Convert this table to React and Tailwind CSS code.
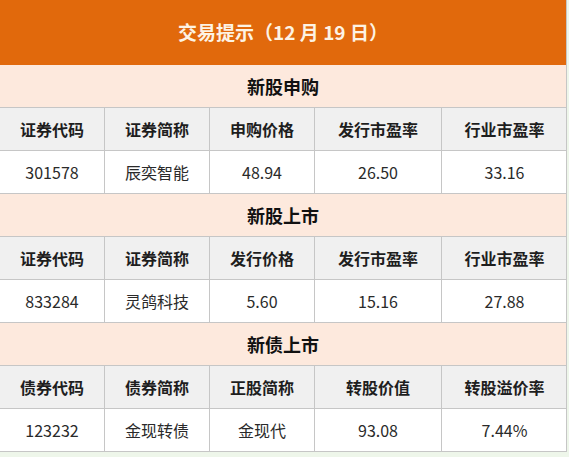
const sections = [
  {
    title: "新股申购",
    head: ["证券代码", "证券简称", "申购价格", "发行市盈率", "行业市盈率"],
    row: ["301578", "辰奕智能", "48.94", "26.50", "33.16"],
  },
  {
    title: "新股上市",
    head: ["证券代码", "证券简称", "发行价格", "发行市盈率", "行业市盈率"],
    row: ["833284", "灵鸽科技", "5.60", "15.16", "27.88"],
  },
  {
    title: "新债上市",
    head: ["债券代码", "债券简称", "正股简称", "转股价值", "转股溢价率"],
    row: ["123232", "金现转债", "金现代", "93.08", "7.44%"],
  },
];

const cols = "grid grid-cols-[105px_105px_105px_127px_125px]";

function Row({ cells, head }) {
  return (
    <div className={`${cols} h-[43px] border-b border-[#c6c6c6] ${head ? "bg-[#f0f0f0]" : "bg-white"}`}>
      {cells.map((c, i) => (
        <div
          key={i}
          className={`flex items-center justify-center text-[16px] ${
            i < 4 ? "border-r border-[#c6c6c6]" : ""
          } ${head ? "font-bold text-[#1e1e1e]" : "text-[#2a2a2a]"}`}
        >
          {c}
        </div>
      ))}
    </div>
  );
}

export default function App() {
  return (
    <div
      className="w-[569px] h-[457px] bg-[#eef6ea] overflow-hidden"
      style={{ fontFamily: '"Noto Sans CJK SC", "Noto Sans", sans-serif' }}
    >
      <div className="w-[567px] border-r border-[#c6c6c6] bg-white">
        <div className="h-[65px] bg-[#e1690c] flex items-center justify-center text-[19px] font-bold text-[#fdf3e4]">
          交易提示（12 月 19 日）
        </div>
        {sections.map((s) => (
          <div key={s.title}>
            <div className="h-[43px] bg-[#fde9dd] border-b border-[#c6c6c6] flex items-center justify-center text-[18px] font-bold text-[#111]">
              {s.title}
            </div>
            <Row cells={s.head} head />
            <Row cells={s.row} />
          </div>
        ))}
      </div>
    </div>
  );
}
